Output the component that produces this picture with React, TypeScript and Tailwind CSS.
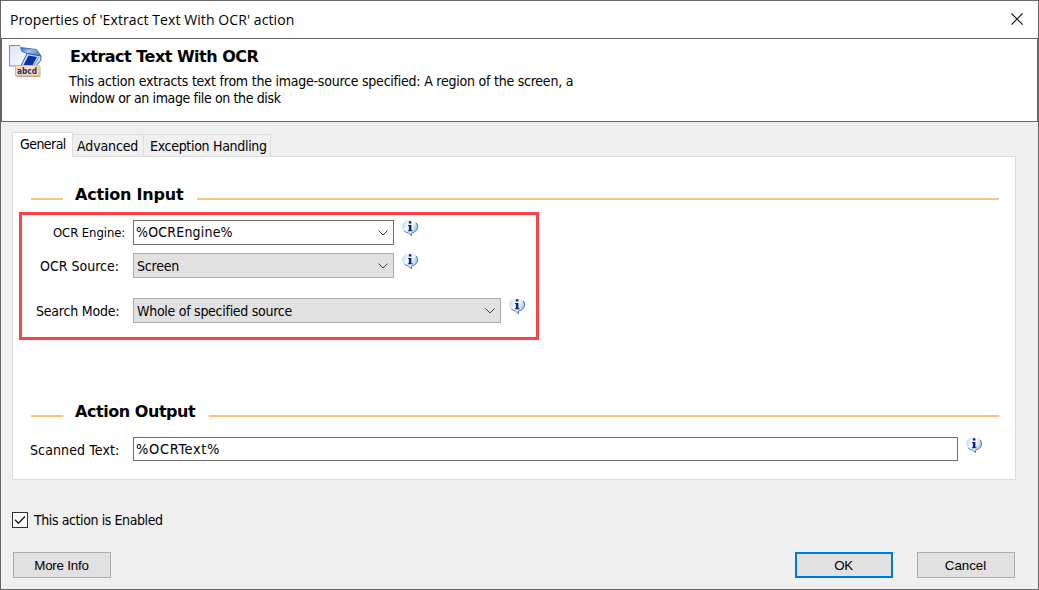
import React from "react";

const sans = "font-['DejaVu_Sans_Condensed','DejaVu_Sans',sans-serif] [font-stretch:condensed]";
const wide = "font-['DejaVu_Sans',sans-serif] [font-stretch:normal]";

function InfoIcon({ id }: { id: string }) {
  return (
    <svg width="17" height="17" viewBox="0 0 17 17" className="shrink-0">
      <defs>
        <linearGradient id={id} x1="0" y1="0" x2="1" y2="0.3">
          <stop offset="0" stopColor="#a9d4f7" />
          <stop offset="0.4" stopColor="#f4fbff" />
          <stop offset="0.7" stopColor="#eef8ff" />
          <stop offset="1" stopColor="#9fc6e6" />
        </linearGradient>
      </defs>
      <path
        d="M8 .1C3.700.1.2 2.800.2 6.800c0 3.200 2.500 5.900 6.100 6.500L9.700 16.200l.1-3c3.600-.6 6.100-3.400 6.100-6.400C15.900 2.800 12.300.1 8 .1z"
        fill={`url(#${id})`}
      />
      <path d="M14.200 3c2.100 2.700 1.800 6-.7 8.200-1.100 1-2.400 1.500-3.900 1.800l-.1 2.700-3.200-2.700c-1.600-.3-3-1-4-2.100" fill="none" stroke="#54799f" strokeWidth="1" />
      <path d="M6.800 1.300h2.600v2.200H6.800zM6 4.900h3.400v5.300h1.100v1H5.800v-1h1.100V5.900H6z" fill="#10208a" />
    </svg>
  );
}

function OcrIcon() {
  return (
    <svg width="36" height="34" viewBox="0 0 36 34" className="block">
      <defs>
        <linearGradient id="page" x1="0" y1="0" x2="1" y2="1">
          <stop offset="0" stopColor="#d6e4f8" />
          <stop offset="1" stopColor="#ffffff" />
        </linearGradient>
        <linearGradient id="lid" x1="0" y1="0" x2="1" y2=".6">
          <stop offset="0" stopColor="#2f62ae" />
          <stop offset=".5" stopColor="#a9c8e8" />
          <stop offset="1" stopColor="#4f7fc0" />
        </linearGradient>
      </defs>
      <path d="M.5.500h11l5 5-4 16H.500z" fill="url(#page)" />
      <path d="M11.500.500H.500v20.500H8" fill="none" stroke="#6f8fc0" />
      <path d="M11.500 2.500L27.500 4.500l4.500 6.500-14-2.500-5-2z" fill="url(#lid)" stroke="#3565ad" strokeWidth=".9" />
      <path d="M18 8.500L32 11v4l-5.500 6.500H11.500z" fill="#c8dcf3" stroke="#2456a4" strokeWidth=".9" />
      <path d="M19.500 10.500l8.500 1.500-5 9H14z" fill="#0632a4" />
      <path d="M29.500 12.500L24.500 21" fill="none" stroke="#82a8d9" strokeWidth="1.200" />
      <path d="M7.500 31.500h23.500v-10" fill="none" stroke="#b4aca4" />
      <rect x="6.500" y="20.500" width="23.500" height="10" fill="#fbdcb5" stroke="#deb68c" />
      <text x="8" y="28.500" textLength="20" lengthAdjust="spacingAndGlyphs" fontFamily="DejaVu Sans" fontWeight="bold" fontSize="8.500" fill="#252a78">abcd</text>
    </svg>
  );
}

function Chevron() {
  return (
    <svg width="10" height="6" viewBox="0 0 10 6" className="mr-[5px] shrink-0">
      <path d="M.5.500L5 5 9.500.500" fill="none" stroke="#444" strokeWidth="1" />
    </svg>
  );
}

function Combo({ box, children }: { box: string; children: React.ReactNode }) {
  return (
    <div className={`flex h-[25px] shrink-0 items-center justify-between border pl-[3px] ${box}`}>
      {children}
      <Chevron />
    </div>
  );
}

function Section({ title, width, spacing }: { title: string; width: string; spacing: string }) {
  return (
    <div className="flex h-[20px] items-center pl-[18px] pr-[16px]">
      <span className="mt-[9px] h-[2px] w-[32px] bg-[#ffc080]" />
      <h2 className={`ml-[12px] shrink-0 pt-[2px] text-[16px] leading-[20px] font-bold ${wide} ${width} ${spacing}`}>{title}</h2>
      <span className="mt-[9px] h-[2px] flex-1 bg-[#ffc080]" />
    </div>
  );
}

export default function App() {
  return (
    <div className={`flex h-[590px] w-[1039px] flex-col whitespace-nowrap border border-[#656565] bg-[#f0f0f0] text-[14px] text-black ${sans}`}>
      <div className="flex h-[37px] shrink-0 items-center justify-between bg-white pl-[9px] pr-[15px]">
        <span className="font-['Open_Sans','Noto_Sans',sans-serif] text-[14px] tracking-[0.09px] [font-stretch:normal]">Properties of 'Extract Text With OCR' action</span>
        <svg width="12" height="12" viewBox="0 0 12 12" className="mb-[2px]">
          <path d="M.4.4l11.200 11.200M11.600.4L.4 11.600" stroke="#111" strokeWidth="1.200" />
        </svg>
      </div>

      <header className="flex h-[84px] shrink-0 border border-[#656565] bg-white pl-[7px] pt-[6px]">
        <OcrIcon />
        <div className="ml-[24px]">
          <h1 className={`mt-[2px] ml-[1px] text-[16px] leading-[20px] font-bold tracking-[-0.5px] ${wide}`}>Extract Text With OCR</h1>
          <p className="mt-[6px] leading-[17px]">
            <span className="block tracking-[-0.23px]">This action extracts text from the image-source specified: A region of the screen, a</span>
            <span className="block tracking-[-0.37px]">window or an image file on the disk</span>
          </p>
        </div>
      </header>

      <div className="mt-[9px] flex h-[25px] shrink-0 items-end pl-[11px]">
        <div className="relative z-10 -mb-px h-[25px] w-[61px] border border-b-0 border-[#dcdcdc] bg-white pl-[7px] leading-[23px] tracking-[-0.55px]">General</div>
        <div className="h-[22px] w-[71px] border-t border-r border-[#dcdcdc] pl-[4px] leading-[22px] tracking-[-0.12px]">Advanced</div>
        <div className="h-[22px] w-[127px] border-t border-r border-[#dcdcdc] pl-[6px] leading-[22px] tracking-[-0.3px]">Exception Handling</div>
      </div>

      <main className="ml-[11px] flex h-[324px] w-[1004px] shrink-0 flex-col border border-[#dcdcdc] bg-white pt-[27px]">
        <Section title="Action Input" width="w-[122px]" spacing="tracking-[-0.2px]" />
        <div className="mt-[8px] ml-[6px] flex h-[128px] w-[520px] shrink-0 flex-col border-[3px] border-[#fc4444] pt-[5px]">
          <div className="flex h-[33px]">
            <div className="w-[111px] pl-[31px] text-[13px] leading-[25px] tracking-[-0.1px]">OCR Engine:</div>
            <Combo box="w-[261px] border-[#707070] bg-white"><span className="-ml-px tracking-[0.2px]">%OCREngine%</span></Combo>
            <div className="ml-[8px]"><InfoIcon id="info-engine" /></div>
          </div>
          <div className="flex h-[45px]">
            <div className="w-[111px] pl-[18px] leading-[26px]">OCR Source:</div>
            <Combo box="w-[261px] border-[#acacac] bg-[#e1e1e1]"><span className="pt-px tracking-[-0.2px]">Screen</span></Combo>
            <div className="ml-[8px]"><InfoIcon id="info-source" /></div>
          </div>
          <div className="flex h-[25px]">
            <div className="w-[111px] pl-[14px] leading-[26px] tracking-[-0.2px]">Search Mode:</div>
            <Combo box="w-[368px] border-[#acacac] bg-[#e1e1e1]"><span className="pt-px tracking-[-0.27px]">Whole of specified source</span></Combo>
            <div className="ml-[8px]"><InfoIcon id="info-mode" /></div>
          </div>
        </div>
        <div className="mt-[61px]"><Section title="Action Output" width="w-[134px]" spacing="tracking-[-0.45px]" /></div>
        <div className="mt-[16px] flex">
          <div className="w-[120px] pl-[17px] leading-[26px] tracking-[0.12px]">Scanned Text:</div>
          <div className="h-[24px] w-[825px] border border-[#707070] pl-[2px] text-[14.5px] leading-[23px] tracking-[0.65px]">%OCRText%</div>
          <div className="ml-[8px]"><InfoIcon id="info-text" /></div>
        </div>
      </main>

      <div className="mt-[32px] flex h-[16px] shrink-0 items-center pl-[11px]">
        <span className="flex h-[16px] w-[16px] items-center justify-center border border-[#333] bg-white">
          <svg width="12" height="10" viewBox="0 0 12 10">
            <path d="M1 4.800L4.400 8.300 11 1.500" fill="none" stroke="#222" strokeWidth="1.400" />
          </svg>
        </span>
        <span className="ml-[6px] leading-[16px] tracking-[-0.4px]">This action is Enabled</span>
      </div>

      <footer className="mt-[24px] flex shrink-0 pl-[12px] font-['Liberation_Sans',sans-serif] text-[13.33px] [font-stretch:normal]">
        <button className="h-[26px] w-[98px] border border-[#adadad] bg-[#e1e1e1] pt-[2px] pr-[1px] tracking-[-0.2px]">More Info</button>
        <button className="ml-[684px] h-[26px] w-[98px] border-2 border-[#0078d7] bg-[#e1e1e1] pt-[2px] pr-[1px] tracking-[-0.5px]">OK</button>
        <button className="ml-[24px] h-[26px] w-[98px] border border-[#adadad] bg-[#e1e1e1] pt-[2px] pr-[1px]">Cancel</button>
      </footer>
    </div>
  );
}
